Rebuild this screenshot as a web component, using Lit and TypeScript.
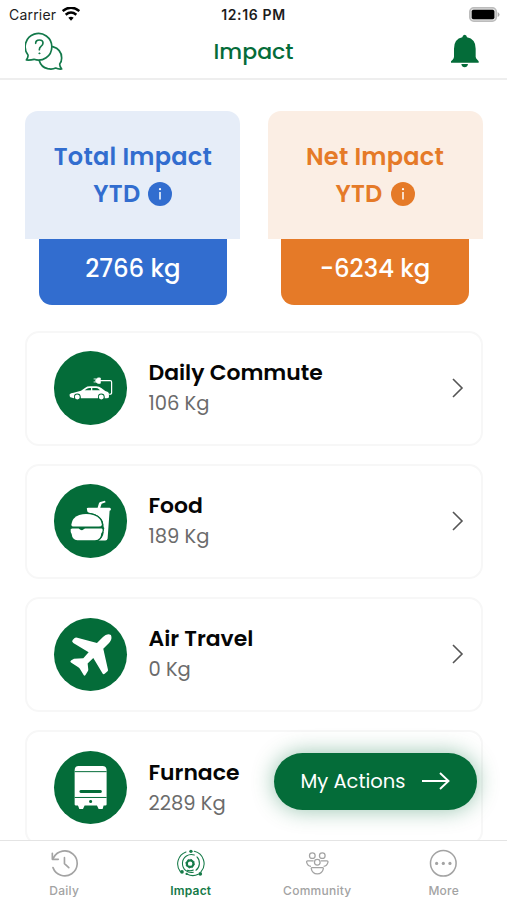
import { LitElement, html, svg, css } from "lit";
import { customElement, property } from "lit/decorators.js";

const icons = {
  car: svg`<svg viewBox="100 78 221 221" fill="none">
    <path d="M147 208q3-4 12-5l22-6 13-9q5-4 15-4h18q9 0 15 5l12 9 8 3q4 3 3 9v8l-5 2h-8a10 10 0 0 0-20 0h-52a10 10 0 0 0-20 0l-11-3q-3-3-2-9z" fill="#fff"/>
    <path d="M192 196l7-5q3-2 8-2h4v7zM215 189h11q5 0 9 4l3 3h-23z" fill="#046c39"/>
    <circle cx="170" cy="216" r="10" fill="#046c39"/><circle cx="242" cy="216" r="10" fill="#046c39"/>
    <circle cx="170" cy="216" r="7.500" fill="#fff"/><circle cx="242" cy="216" r="7.500" fill="#fff"/>
    <path d="M238 167h31q4 0 4 4v33q0 4-7 4" stroke="#fff" stroke-width="3.600"/>
    <path d="M239 159v16h-7q-6-2-7-8 1-6 7-8zM219 162h8M219 171h8" fill="#fff" stroke="#fff" stroke-width="2.600"/>
  </svg>`,
  food: svg`<svg viewBox="100 73 221 221">
    <path d="M199 149q-2-5 4-5h28l4-13q1-3 4-4l14-4 2 5-12 4-4 12h28q4 0 4 5 0 4-4 4l-6 84q-1 6-7 6h-22q16-8 17-24-4-5 0-8 4-5 0-9 1-27-26-38-10-4-18-5-5-1-5-4z" fill="#fff"/>
    <g fill="#fff" stroke="#046c39" stroke-width="8" paint-order="stroke">
    <path d="M152 195q2-21 24-29 22-6 44 1 22 8 24 28-1 6-9 6h-74q-9 0-9-6z"/>
    <path d="M154 207h20q9 8 14 3l5-3h50q3 0 3 5-1 7-4 9-1 21-19 21h-53q-15-1-17-19-4-5-3-14z"/>
    </g>
  </svg>`,
  plane: svg`<svg viewBox="100 82 221 221">
    <path d="M271 133q5 12-5 23l-18 18 14 63q1 4-2 6l-7 6q-5 4-8-2l-27-45-17 17 2 18q0 3-2 6l-7 11q-3 3-5-1l-10-16q-2-4-6-7l-22-14q-4-3 0-6l9-6 28-1 16-18-46-28q-6-4-2-9l6-6q3-3 8-1l59 16 18-18q12-12 24-6z" fill="#fff"/>
  </svg>`,
  furnace: svg`<svg viewBox="100 76 221 221">
    <path d="M162 134q0-13 12-13h71q13 0 13 13v103q0 3-4 3h-5l-3 10h-12l-5-10h-37l-5 10h-11l-4-10h-6q-4 0-4-3z" fill="#fff"/>
    <path d="M162 138h96M162 215.500h96" stroke="#046c39" stroke-width="3"/>
    <path d="M181 197.500h58" stroke="#046c39" stroke-width="9" stroke-linecap="round"/>
    <circle cx="210" cy="228" r="4.500" fill="#046c39"/>
  </svg>`,
  daily: svg`<svg viewBox="150 42 86 86" width="28.600" height="28.600" fill="none" stroke="currentColor" stroke-width="5" stroke-linecap="round" stroke-linejoin="round">
    <path d="M159 98a37.500 37.500 0 1 0 2-30M157 55v18h18M193.500 68v18l13 12"/>
  </svg>`,
  impact: svg`<svg viewBox="527 42 86 86" width="28.600" height="28.600" fill="none" stroke="currentColor" stroke-width="3.200" stroke-linecap="round">
    <path d="M557 51a38 38 0 0 0-17 59M582 49a38 38 0 0 1 20 62M594 118a38 38 0 0 1-33 0"/>
    <path d="M582 60a27 27 0 1 0-3 52M590 66a27 27 0 0 1-3 40"/>
    <path d="M561 106a22 22 0 0 0 18-1"/>
    <circle cx="569.500" cy="86" r="10" stroke-width="6.500"/>
    <circle cx="569.500" cy="86" r="13" stroke-width="3" stroke-dasharray="4 6.200" stroke-linecap="butt"/>
    <g fill="currentColor" stroke="none"><circle cx="572" cy="49" r="5"/><circle cx="545" cy="111" r="5.500"/><circle cx="600" cy="117" r="5.500"/><circle cx="559" cy="117" r="3.500"/></g>
  </svg>`,
  community: svg`<svg viewBox="146 42 86 86" width="28.600" height="28.600" fill="none" stroke="currentColor" stroke-width="3.800" stroke-linejoin="round">
    <circle cx="174" cy="62" r="8.500"/><circle cx="204" cy="62" r="8.500"/><circle cx="189" cy="82" r="8.500"/>
    <path d="M173 98h32q3 0 2 4-3 15-18 15t-18-15q-1-4 2-4zM178 78h-18q-4 0-3 4 3 11 13 12M200 78h18q4 0 3 4-3 11-13 12"/>
  </svg>`,
  more: svg`<svg viewBox="525 42 86 86" width="28.600" height="28.600" fill="none" stroke="currentColor" stroke-width="4.600">
    <circle cx="568" cy="85" r="38.500"/>
    <g fill="currentColor" stroke="none"><circle cx="548" cy="85.500" r="4.800"/><circle cx="568" cy="85.500" r="4.800"/><circle cx="588" cy="85.500" r="4.800"/></g>
  </svg>`,
};
type IconName = keyof typeof icons;

@customElement("impact-summary")
class ImpactSummary extends LitElement {
  @property() heading = "";
  @property() value = "";
  static styles = css`
    :host { display: flex; flex-direction: column; align-items: center; width: 215px; }
    .top { box-sizing: border-box; width: 100%; height: 128px; padding-top: 28px; border-radius: 13px 13px 0 0; background: var(--tint); color: var(--tone); text-align: center; font-size: 24px; font-weight: 600; line-height: 36.500px; letter-spacing: 0.250px; }
    .line { display: flex; align-items: center; justify-content: center; gap: 8px; }
    .info { width: 24px; height: 24px; }
    .bottom { width: 188px; height: 66px; border-radius: 0 0 13px 13px; background: var(--tone); color: #fff; text-align: center; font-size: 24.400px; line-height: 60px; font-weight: 500; }
  `;
  render() {
    return html`
      <div class="top">
        <div>${this.heading}</div>
        <div class="line"><span>YTD</span>
          <svg class="info" viewBox="0 0 24 24"><circle cx="12" cy="12" r="12" fill="var(--tone)"/><circle cx="12" cy="7.200" r="1.100" fill="#fff"/><path d="M12 10v7.500" stroke="#fff" stroke-width="1.500"/></svg>
        </div>
      </div>
      <div class="bottom">${this.value}</div>`;
  }
}

@customElement("impact-row")
class ImpactRow extends LitElement {
  @property() icon: IconName = "car";
  @property() name = "";
  @property() amount = "";
  static styles = css`
    :host { box-sizing: border-box; display: flex; align-items: center; height: 115px; padding: 0 17px 0 26.500px; border: 2px solid #f7f7f7; border-radius: 14px; background: #fff; }
    .badge { width: 73.600px; height: 73.600px; border-radius: 50%; background: #046c39; flex: none; }
    .badge svg { display: block; width: 100%; height: 100%; }
    .copy { flex: 1; margin-left: 21px; }
    .name { font-size: 21.900px; line-height: 31px; font-weight: 600; color: #050505; }
    .amount { font-size: 19.500px; line-height: 31px; color: #6b6b6b; font-weight: 400; }
    .chevron { width: 12px; height: 20px; }
  `;
  render() {
    return html`
      <div class="badge">${icons[this.icon]}</div>
      <div class="copy"><div class="name">${this.name}</div><div class="amount">${this.amount}</div></div>
      <svg class="chevron" viewBox="0 0 12 20" fill="none" stroke="#555" stroke-width="1.600"><path d="M1 1l9 9-9 9"/></svg>`;
  }
}

@customElement("app-root")
class AppRoot extends LitElement {
  static styles = css`
    :host { display: flex; flex-direction: column; position: relative; width: 507px; height: 900px; overflow: hidden; background: #fff; font-family: Poppins, Inter, sans-serif; white-space: nowrap; }
    .status { display: grid; grid-template-columns: 1fr auto 1fr; align-items: center; box-sizing: border-box; height: 28px; padding: 0 7px 0 9px; font-family: Inter, sans-serif; font-size: 14px; color: #1c1c1c; flex: none; }
    .carrier { display: flex; align-items: center; gap: 6px; letter-spacing: 0.200px; }
    .time { font-weight: 600; font-size: 14px; letter-spacing: 0.650px; margin-right: 2px; }
    .battery { justify-self: end; }
    .nav { display: grid; grid-template-columns: 1fr auto 1fr; align-items: center; box-sizing: border-box; height: 52px; padding: 0 27px 4px 25px; border-bottom: 2px solid #eee; color: #046c39; flex: none; }
    .title { font-size: 22px; font-weight: 500; padding-left: 2px; margin-top: 1px; }
    .bell { justify-self: end; }
    .content { flex: 1; min-height: 0; overflow: hidden; padding: 31px 24.500px 0 25.400px; }
    .summaries { display: flex; justify-content: space-between; margin-bottom: 25.500px; }
    .blue { --tint: #e6edf8; --tone: #326dcf; }
    .orange { --tint: #fbeee4; --tone: #e57a28; }
    .list { display: flex; flex-direction: column; gap: 18.200px; }
    .action { position: absolute; left: 273.500px; top: 753px; box-sizing: border-box; width: 203px; height: 57px; display: flex; align-items: center; justify-content: space-between; padding: 0 27px 1px 27px; border: 0; border-radius: 29px; background: #046c39; color: #fff; font: 400 19.500px Poppins, Inter, sans-serif; box-shadow: 0 0 22px rgba(0, 111, 60, 0.420); }
    .tabs { position: relative; display: grid; grid-template-columns: repeat(4, 1fr); box-sizing: border-box; height: 60px; padding-left: 1px; border-top: 1.500px solid #e4e4e4; background: #fff; flex: none; font-family: Inter, sans-serif; font-size: 12px; font-weight: 500; color: #a3a3a3; }
    .tab { display: flex; flex-direction: column; align-items: center; padding-top: 8px; gap: 5.500px; line-height: 15px; letter-spacing: 0.250px; }
    .active { color: #157a48; font-weight: 600; letter-spacing: 0.200px; }
  `;
  render() {
    const rows: { icon: IconName; name: string; amount: string }[] = [
      { icon: "car", name: "Daily Commute", amount: "106 Kg" },
      { icon: "food", name: "Food", amount: "189 Kg" },
      { icon: "plane", name: "Air Travel", amount: "0 Kg" },
      { icon: "furnace", name: "Furnace", amount: "2289 Kg" },
    ];
    const tabs: { icon: IconName; label: string }[] = [
      { icon: "daily", label: "Daily" },
      { icon: "impact", label: "Impact" },
      { icon: "community", label: "Community" },
      { icon: "more", label: "More" },
    ];
    return html`
      <div class="status">
        <div class="carrier">Carrier
          <svg width="18" height="14" viewBox="186 17 54 42" fill="none" stroke="#000" stroke-width="7.500"><path d="M188 29q25-20 50 0M197 40q16-13 32 0"/><path d="M205 49q8-6 16 0l-8 9z" fill="#000" stroke="none"/></svg>
        </div>
        <div class="time">12:16 PM</div>
        <svg class="battery" width="31" height="15" viewBox="0 0 31 15"><rect x="0.800" y="0.800" width="26.500" height="13.400" rx="4" fill="#ddd" stroke="#bcbcbc" stroke-width="1.600"/><rect x="2.700" y="2.700" width="22.700" height="9.600" rx="1.800"/><path d="M28.700 5q1.800 1 1.800 2.500t-1.800 2.500z" fill="#aaa"/></svg>
      </div>
      <div class="nav">
        <svg width="38" height="38" viewBox="75 99 114 114" fill="none" stroke="#12794a" stroke-width="5" stroke-linejoin="round" stroke-linecap="round">
          <path d="M79 183q6-8 5-15a40 40 0 1 1 18 13q-10 3-23 2z"/>
          <path d="M158 143q27 8 27 34 0 12-6 18 0 8 6 15-10 1-18-3-10 5-24 2-20-5-25-24"/>
          <path d="M107 133q0-10 11-10t11 9q0 6-6 10-5 4-5 10"/><circle cx="118" cy="163" r="1.800" fill="#12794a" stroke-width="2"/>
        </svg>
        <div class="title">Impact</div>
        <svg class="bell" width="30" height="35" viewBox="588 105 90 105" fill="#046c39"><path d="M632 107q6 0 7 8 26 5 26 34v24q0 5 5 9l4 5v4h-83v-4l5-5q4-4 4-9v-24q0-29 25-34 1-8 7-8zM622 195h20q-2 10-10 10t-10-10z"/></svg>
      </div>
      <div class="content">
        <div class="summaries">
          <impact-summary class="blue" heading="Total Impact" value="2766 kg"></impact-summary>
          <impact-summary class="orange" heading="Net Impact" value="-6234 kg"></impact-summary>
        </div>
        <div class="list">${rows.map((r) => html`<impact-row .icon=${r.icon} .name=${r.name} .amount=${r.amount}></impact-row>`)}</div>
      </div>
      <button class="action"><span>My Actions</span>
        <svg width="28" height="18" viewBox="0 0 28 18" fill="none" stroke="#fff" stroke-width="1.900"><path d="M0 9h26M18 1l8.500 8-8.500 8"/></svg>
      </button>
      <div class="tabs">${tabs.map((t) => html`<div class="tab ${t.label === "Impact" ? "active" : ""}">${icons[t.icon]}<span>${t.label}</span></div>`)}</div>`;
  }
}
